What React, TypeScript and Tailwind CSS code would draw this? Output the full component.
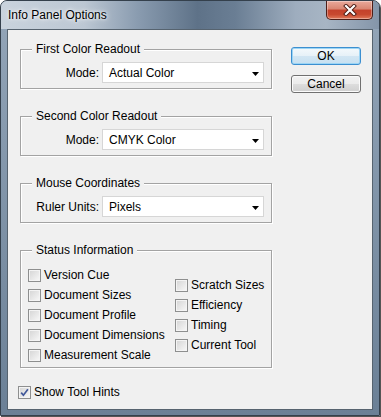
import type { ReactNode } from "react";

function Checkbox({ checked }: { checked?: boolean }) {
  return (
    <span className="flex h-[13px] w-[13px] shrink-0 items-center justify-center border border-[#8e8f8f] bg-[linear-gradient(135deg,#d4d4d4,#f9f9f9)] shadow-[inset_0_0_0_1px_#f4f4f4]">
      {checked && (
        <svg width="9" height="9" viewBox="0 0 9 9">
          <path d="M1.2 4.6 L3.4 7.2 L7.9 1.2" fill="none" stroke="#41589a" strokeWidth="1.7" />
        </svg>
      )}
    </span>
  );
}

function Check({ label, checked }: { label: string; checked?: boolean }) {
  return (
    <div className="flex h-[20px] items-center gap-[3px] whitespace-nowrap">
      <Checkbox checked={checked} />
      <span>{label}</span>
    </div>
  );
}

function Group({ title, children, className = "" }: { title: string; children: ReactNode; className?: string }) {
  return (
    <fieldset
      className={`border border-[#a3a3a3] shadow-[inset_1px_1px_0_#fff,1px_1px_0_#fff] ${className}`}
    >
      <legend className="ml-[11px] bg-[#f0f0f0] px-[4px] leading-[14px]">{title}</legend>
      {children}
    </fieldset>
  );
}

function Select({ value }: { value: string }) {
  return (
    <div className="flex h-[21px] w-[162px] items-center justify-between border border-[#d6d6d6] bg-white pl-[6px] pr-[4px]">
      <span>{value}</span>
      <svg width="7" height="4" viewBox="0 0 7 4" className="mt-[2px]">
        <path d="M0 0 H7 L3.5 4 Z" fill="#000" />
      </svg>
    </div>
  );
}

function SelectRow({ label, value }: { label: string; value: string }) {
  return (
    <div className="flex items-center pb-[5px] pl-[15px] pt-[6px]">
      <span className="w-[63px] text-right">{label}</span>
      <div className="ml-[3px]">
        <Select value={value} />
      </div>
    </div>
  );
}

export default function App() {
  const left = ["Version Cue", "Document Sizes", "Document Profile", "Document Dimensions", "Measurement Scale"];
  const right = ["Scratch Sizes", "Efficiency", "Timing", "Current Tool"];

  return (
    <div className="h-[417px] w-[381px] bg-white font-['Liberation_Sans',Arial,sans-serif] text-[12px] leading-[14px] text-black">
      <div className="flex h-[416px] w-[380px] flex-col rounded-t-[7px] border border-[#34404c] bg-[linear-gradient(to_bottom,#94a6b9,#6b8096)] shadow-[1px_1px_0_#555]">
        {/* title bar */}
        <div className="flex h-[28px] rounded-t-[6px] bg-[linear-gradient(to_right,#c9d3dd_0%,#bcc7d3_22%,#8a9cb0_36%,#5e7288_52%,#6a7e94_62%,#9eadbe_78%,#a7b5c4_86%,#8495a9_100%)]">
          <span className="ml-[7px] self-center text-[12px] [text-shadow:0_0_6px_#ffffff,0_0_3px_#ffffff]">
            Info Panel Options
          </span>
          <div className="ml-auto mr-[6px] flex h-[19px] w-[47px] items-center justify-center rounded-b-[5px] border border-t-0 border-[#4e1f18] bg-[linear-gradient(to_bottom,#e9a99b_0%,#d88571_45%,#c4412b_50%,#c8492f_75%,#e07a5b_100%)] shadow-[inset_0_0_0_1px_rgba(255,255,255,0.35)]">
            <svg width="14" height="12" viewBox="0 0 14 12">
              <path d="M3 2 L11 10 M11 2 L3 10" stroke="#4a1a12" strokeWidth="4" strokeLinecap="square" />
              <path d="M3 2 L11 10 M11 2 L3 10" stroke="#fff" strokeWidth="2.2" strokeLinecap="square" />
            </svg>
          </div>
        </div>

        {/* client area */}
        <div className="mx-[6px] mb-[5px] flex flex-1 flex-col border border-[#56636f] bg-[#f0f0f0]">
          <div className="flex pl-[12px] pt-[12px]">
            <div className="flex w-[252px] flex-col gap-[20px]">
              <Group title="First Color Readout">
                <SelectRow label="Mode:" value="Actual Color" />
              </Group>
              <Group title="Second Color Readout">
                <SelectRow label="Mode:" value="CMYK Color" />
              </Group>
              <Group title="Mouse Coordinates">
                <SelectRow label="Ruler Units:" value="Pixels" />
              </Group>
              <Group title="Status Information">
                <div className="flex items-center pb-[2px] pl-[7px] pt-[8px]">
                  <div className="flex w-[147px] flex-col">
                    {left.map((l) => (
                      <Check key={l} label={l} />
                    ))}
                  </div>
                  <div className="flex flex-col">
                    {right.map((l) => (
                      <Check key={l} label={l} />
                    ))}
                  </div>
                </div>
              </Group>
            </div>

            <div className="ml-[19px] flex flex-col gap-[10px] pt-[5px]">
              <button className="h-[18px] w-[70px] rounded-[3px] border border-[#3c8fd0] bg-[linear-gradient(to_bottom,#f4f9fc_0%,#e6f1f8_50%,#d2e6f3_51%,#c7e0f1_100%)] leading-[14px] shadow-[inset_0_0_0_1px_#9cd5f5]">
                OK
              </button>
              <button className="h-[18px] w-[70px] rounded-[3px] border border-[#707070] bg-[linear-gradient(to_bottom,#f2f2f2_0%,#ebebeb_50%,#dddddd_51%,#cfcfcf_100%)] leading-[14px] shadow-[inset_0_0_0_1px_#fbfbfb]">
                Cancel
              </button>
            </div>
          </div>

          <div className="mt-[14px] pl-[10px]">
            <Check label="Show Tool Hints" checked />
          </div>
        </div>
      </div>
    </div>
  );
}
